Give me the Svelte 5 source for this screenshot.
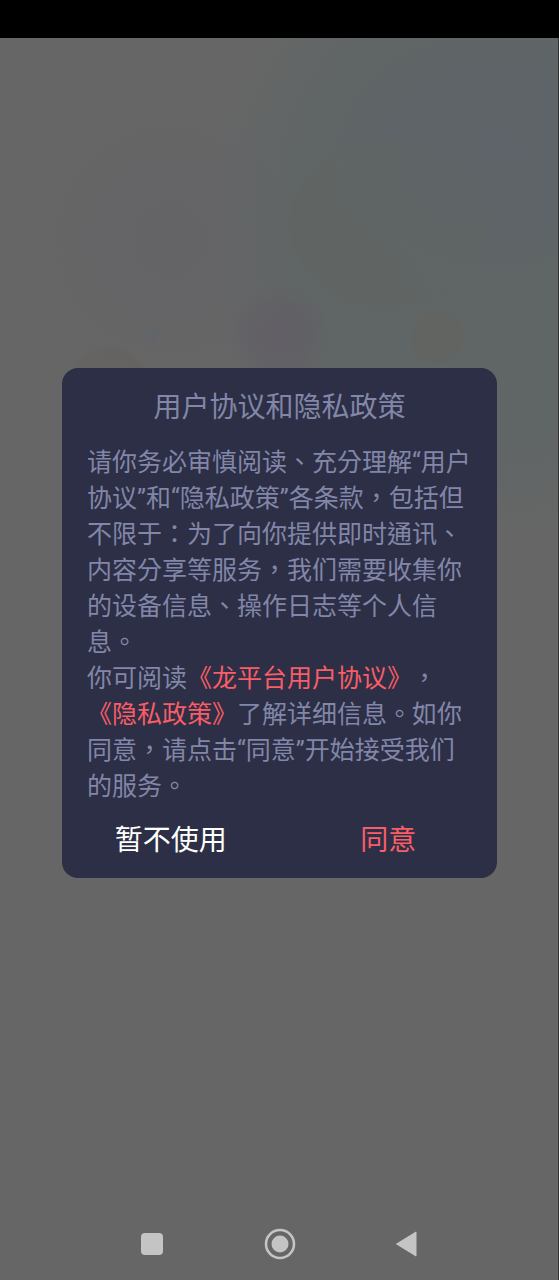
<script lang="ts">
	let open = $state(true);

	function close() {
		open = false;
	}
</script>

<div class="screen">
	<svg class="decor" viewBox="0 0 559 640" aria-hidden="true">
		<defs>
			<radialGradient id="teal">
				<stop offset="0" stop-color="#606666" />
				<stop offset="0.7" stop-color="#606565" />
				<stop offset="1" stop-color="#606666" stop-opacity="0" />
			</radialGradient>
			<radialGradient id="blue">
				<stop offset="0" stop-color="#5e6469" />
				<stop offset="0.6" stop-color="#5e6468" stop-opacity="0.8" />
				<stop offset="1" stop-color="#5e6468" stop-opacity="0" />
			</radialGradient>
			<radialGradient id="grey">
				<stop offset="0" stop-color="#646467" />
				<stop offset="1" stop-color="#646467" stop-opacity="0" />
			</radialGradient>
			<radialGradient id="violet">
				<stop offset="0" stop-color="#625f66" />
				<stop offset="0.6" stop-color="#626066" stop-opacity="0.7" />
				<stop offset="1" stop-color="#626066" stop-opacity="0" />
			</radialGradient>
		</defs>
		<circle cx="170" cy="240" r="170" fill="url(#grey)" />
		<ellipse cx="490" cy="220" rx="280" ry="320" fill="url(#teal)" />
		<ellipse cx="500" cy="150" rx="180" ry="130" fill="url(#blue)" />
		<ellipse cx="390" cy="225" rx="100" ry="85" fill="#606664" opacity="0.5" />
		<circle cx="280" cy="336" r="52" fill="url(#violet)" />
		<circle cx="438" cy="338" r="26" fill="#64645f" opacity="0.7" />
		<circle cx="109" cy="388" r="40" fill="#66625f" opacity="0.6" />
		<circle cx="153" cy="336" r="6" fill="#5f666a" opacity="0.6" />
	</svg>

	<div class="status-bar"></div>

	<main>
		{#if open}
			<div class="dialog" role="dialog" aria-modal="true" aria-labelledby="title">
				<h1 id="title">用户协议和隐私政策</h1>
				<div class="content">
					<p>请你务必审慎阅读、充分理解“用户协议”和“隐私政策”各条款，包括但不限于：为了向你提供即时通讯、内容分享等服务，我们需要收集你的设备信息、操作日志等个人信息。</p>
					<p>你可阅读<a href="#agreement">《龙平台用户协议》</a>，<a href="#privacy">《隐私政策》</a>了解详细信息。如你同意，请点击“同意”开始接受我们的服务。</p>
				</div>
				<div class="actions">
					<button type="button" onclick={close}>暂不使用</button>
					<button type="button" class="agree" onclick={close}>同意</button>
				</div>
			</div>
		{/if}
	</main>

	<nav>
		<button type="button" aria-label="Recent apps">
			<svg width="32" height="32" viewBox="0 0 32 32">
				<rect x="5" y="5" width="22" height="22" rx="4" fill="#c4c4c4" />
			</svg>
		</button>
		<button type="button" aria-label="Home">
			<svg width="32" height="32" viewBox="0 0 32 32">
				<circle cx="16" cy="16" r="14" fill="none" stroke="#c4c4c4" stroke-width="2.6" />
				<circle cx="16" cy="16" r="8.5" fill="#c4c4c4" />
			</svg>
		</button>
		<button type="button" aria-label="Back">
			<svg width="32" height="32" viewBox="0 0 32 32">
				<path d="M5.5 16 L25 4 V28 Z" fill="#c4c4c4" stroke="#c4c4c4" stroke-linejoin="round" />
			</svg>
		</button>
	</nav>
</div>

<style>
	:global(body) {
		margin: 0;
		background: #666;
	}
	.screen {
		position: relative;
		display: flex;
		flex-direction: column;
		min-height: 100vh;
		overflow: hidden;
		background: #666;
		box-shadow: inset -1px 0 #333;
		font-family: Roboto, 'Noto Sans CJK TC', sans-serif;
		color: #8286a8;
	}
	.decor {
		position: absolute;
		top: 0;
		left: 0;
		width: calc(100% - 1px);
	}
	.status-bar {
		position: relative;
		height: 38px;
		background: #000;
	}
	main {
		position: relative;
		flex: 1;
		display: flex;
		align-items: center;
		padding: 0 62px;
	}
	.dialog {
		flex: 1;
		border-radius: 16px;
		background: #2c2f45;
		text-spacing-trim: space-all;
	}
	h1 {
		margin: 0;
		padding: 20px 0 17px;
		font-size: 28px;
		font-weight: 400;
		line-height: 40px;
		text-align: center;
	}
	.content {
		padding: 0 25px;
		font-size: 25px;
		line-height: 36px;
	}
	p {
		margin: 0;
	}
	a {
		color: #f95d67;
		text-decoration: none;
	}
	.actions {
		display: flex;
		padding: 16px 0 17px;
	}
	button {
		flex: 1;
		padding: 0;
		border: none;
		background: none;
		color: #fff;
		font: inherit;
		cursor: pointer;
	}
	.actions button {
		font-size: 28px;
		line-height: 40px;
	}
	.actions .agree {
		color: #f95d67;
	}
	nav {
		position: relative;
		display: flex;
		height: 72px;
		padding: 0 88px;
	}
	nav svg {
		display: block;
		margin: 0 auto;
	}
</style>
